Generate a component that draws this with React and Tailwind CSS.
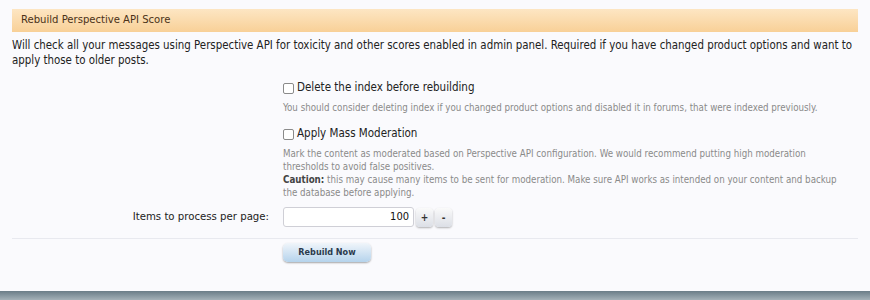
const Hint = ({ children }) => (
  <p className="text-[9.7px] leading-[13px] text-[#8a8a8a]">{children}</p>
);

const CheckRow = ({ label }) => (
  <label className="h-[16px] flex items-center gap-[3px] text-[11.5px] text-[#222]">
    <span className="w-[11px] h-[11px] rounded-[2px] border border-[#8a8a8a] bg-white" />
    {label}
  </label>
);

const StepButton = ({ children }) => (
  <div className="ml-[2px] w-[17px] h-[19px] rounded-[4px] bg-gradient-to-b from-[#fafafa] to-[#dcdfe6] shadow-[0_1px_2px_rgba(0,0,0,0.3)] flex items-center justify-center text-[10px] font-bold text-[#333]">
    {children}
  </div>
);

const App = () => {
  return (
    <div
      className="h-[300px] w-[870px] flex flex-col bg-[#fafafd] overflow-hidden"
      style={{ fontFamily: '"DejaVu Sans Condensed", "DejaVu Sans", sans-serif' }}
    >
      <div className="flex-1 px-3 pt-[9px]">
        <div className="h-[23px] flex items-center px-[9px] bg-gradient-to-b from-[#fde6c3] to-[#f8d097] text-[11.2px] text-[#4a3218] w-[846px]">
          Rebuild Perspective API Score
        </div>

        <p className="mt-[6px] text-[11.4px] leading-[15px] text-[#222]">
          Will check all your messages using Perspective API for toxicity and other scores enabled in admin panel. Required if you have changed product options and want to apply those to older posts.
        </p>

        <div className="ml-[271px] mt-[12px] flex flex-col">
          <CheckRow label="Delete the index before rebuilding" />
          <div className="mt-[5px]">
            <Hint>
              You should consider deleting index if you changed product options and disabled it in forums, that were indexed previously.
            </Hint>
          </div>
          <div className="mt-[12px]">
            <CheckRow label="Apply Mass Moderation" />
          </div>
          <div className="mt-[5px] w-[558px]">
            <Hint>
              Mark the content as moderated based on Perspective API configuration. We would recommend putting high moderation thresholds to avoid false positives.
            </Hint>
            <Hint>
              <b className="text-[#444]">Caution:</b> this may cause many items to be sent for moderation. Make sure API works as intended on your content and backup the database before applying.
            </Hint>
          </div>
        </div>

        <div className="mt-[8px] flex items-center">
          <div className="w-[271px] pr-[14px] text-right text-[11.3px] text-[#222]">
            Items to process per page:
          </div>
          <div className="w-[131px] h-[20px] rounded-[3px] border border-[#cfcfd6] bg-white flex items-center justify-end pr-[4px] text-[11px] text-[#111]">
            100
          </div>
          <StepButton>+</StepButton>
          <StepButton>-</StepButton>
        </div>

        <div className="mt-[11px] w-[846px] border-t border-[#e8e9ef]" />

        <div className="mt-[4px] ml-[271px] flex">
          <button className="w-[88px] h-[19px] rounded-[5px] bg-gradient-to-b from-[#f0f5fa] to-[#b5d3ec] shadow-[0_1px_2px_rgba(0,0,0,0.35)] text-[9px] font-bold text-[#2a3a4c]">
            Rebuild Now
          </button>
        </div>
      </div>

      <div className="h-[9px] bg-gradient-to-b from-[#6b7d88] to-[#a4b1b8]" />
    </div>
  );
};

export default App;
